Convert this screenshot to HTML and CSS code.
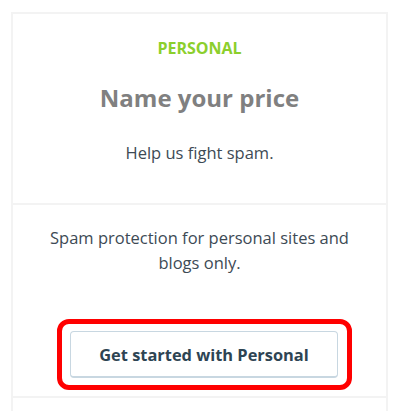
FILE: index.html
```html
<!DOCTYPE html>
<html>
<head>
<meta charset="utf-8">
<link rel="stylesheet" href="styles.css">
</head>
<body>
<div class="card">
  <div class="section head">
    <div class="plan">PERSONAL</div>
    <div class="price">Name your price</div>
    <div class="tagline">Help us fight spam.</div>
  </div>
  <div class="section body">
    <p class="desc">Spam protection for personal sites and blogs only.</p>
    <div class="cta">
      <div class="highlight">
        <button class="btn">Get started with Personal</button>
      </div>
    </div>
  </div>
  <div class="section foot"></div>
</div>
</body>
</html>
```
FILE: styles.css
```css
html, body {
  margin: 0;
  padding: 0;
  background: #fff;
}
body {
  font-family: "Open Sans", "Noto Sans", sans-serif;
  color: #2e4453;
}
.card {
  margin: 12px 0 0 11px;
  width: 373px;
  border: 2px solid #f3f3f3;
  border-bottom: none;
}
.section {
  text-align: center;
}
.head {
  height: 191px;
  border-bottom: 2px solid #f3f3f3;
  box-sizing: border-box;
  padding-top: 24px;
}
.plan {
  color: #8ccf2c;
  font-weight: 700;
  font-size: 16px;
  line-height: 20px;
}
.price {
  color: #808080;
  font-weight: 700;
  font-size: 24px;
  line-height: 30px;
  margin-top: 25px;
}
.tagline {
  font-size: 16.5px;
  line-height: 20px;
  margin-top: 30px;
  color: #3d4a55;
}
.body {
  height: 193px;
  border-bottom: 2px solid #f3f3f3;
  box-sizing: border-box;
  padding-top: 20px;
}
.desc {
  margin: 0 auto;
  width: 330px;
  font-size: 16.5px;
  line-height: 25px;
  color: #3d4a55;
}
.cta {
  display: flex;
  justify-content: center;
  margin-top: 44px;
  padding-left: 10px;
}
.highlight {
  border: 5px solid #ff0000;
  border-radius: 12px;
  padding: 7px 9px 7px 8px;
}
.btn {
  display: block;
  width: 268px;
  height: 47px;
  background: #fff;
  border: 1px solid #c8d7e1;
  border-bottom-width: 2px;
  border-radius: 4px;
  font-family: "Open Sans", "Noto Sans", sans-serif;
  font-weight: 700;
  font-size: 16.4px;
  color: #2e4453;
  padding: 0;
}
.foot {
  height: 20px;
}
```
